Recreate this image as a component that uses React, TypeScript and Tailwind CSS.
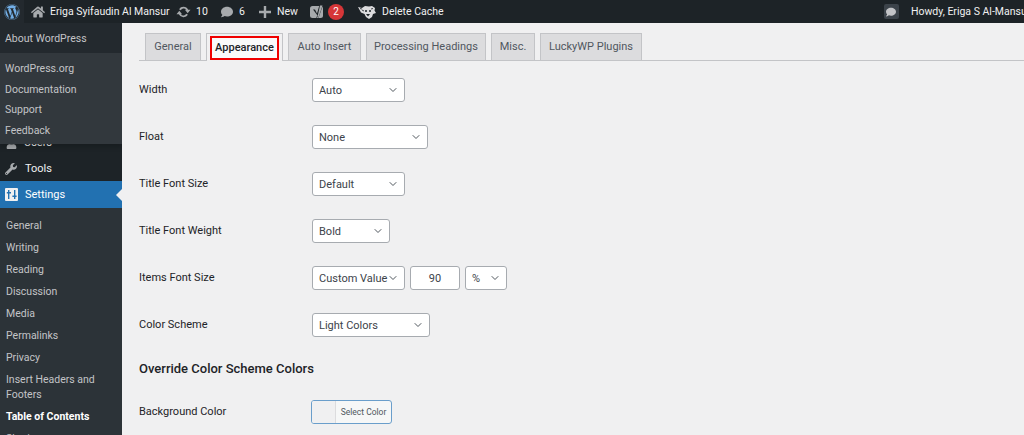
import React from "react";
import { ChevronDown } from "lucide-react";
import { FaWordpress, FaHome, FaComment, FaWrench, FaUser } from "react-icons/fa";

const Select = ({ label, w }: { label: string; w: string }) => (
  <div
    className={`${w} h-[24px] shrink-0 flex items-center justify-between bg-white border border-[#a7abb0] rounded-[3px] pl-[6px] pr-[5px] text-[11px] text-[#3c434a]`}
  >
    <span className="whitespace-nowrap pt-[2px]">{label}</span>
    <ChevronDown size={12} strokeWidth={2} className="text-[#50575e] shrink-0" />
  </div>
);

const Row = ({ label, children }: { label: string; children: React.ReactNode }) => (
  <div className="h-[47px] flex items-start shrink-0">
    <div className="w-[173px] shrink-0 pt-[2px] text-[11px] leading-[20px] text-[#1d2327] [font-weight:450]">{label}</div>
    <div className="flex gap-[5px]">{children}</div>
  </div>
);

const tabs = [
  { name: "General", w: "w-[56px]" },
  { name: "Auto Insert", w: "w-[73px]" },
  { name: "Processing Headings", w: "w-[120px]" },
  { name: "Misc.", w: "w-[44px]" },
  { name: "LuckyWP Plugins", w: "w-[102px]" },
];
const subMenu = ["General", "Writing", "Reading", "Discussion", "Media", "Permalinks", "Privacy"];

const Tab = ({ name, w }: { name: string; w: string }) => (
  <div
    className={`${w} h-[27px] bg-[#dcdcde] border border-b-0 border-[#c3c4c7] flex items-center justify-center text-[11px] text-[#50575e] whitespace-nowrap shrink-0`}
  >
    {name}
  </div>
);

const TopBar = () => (
  <div className="h-[23px] bg-[#1d2327] flex items-center text-[10.5px] text-[#f0f0f1] shrink-0 whitespace-nowrap [&>*]:shrink-0">
    <div className="w-[24px] h-[23px] flex items-center justify-center bg-[#23292e]">
      <FaWordpress size={16} className="text-[#72aee6]" />
    </div>
    <FaHome size={14} className="ml-[7px] text-[#a7aaad]" />
    <span className="ml-[5px] w-[114px]">Eriga Syifaudin Al Mansur</span>
    <svg width="15" height="14" viewBox="0 0 20 20" className="ml-[12px] text-[#a7aaad]" fill="currentColor">
      <path d="M10 2.500a7.500 7.500 0 0 1 6.700 4.200H20l-4 5-4-5h1.900A4.500 4.500 0 0 0 6.200 7.500L3.600 6A7.500 7.500 0 0 1 10 2.500zM4 8.300l4 5H6.100a4.500 4.500 0 0 0 7.700-.8l2.600 1.500A7.500 7.500 0 0 1 3.300 13.300H0z" />
    </svg>
    <span className="ml-[5px] w-[11px]">10</span>
    <FaComment size={12} className="ml-[14px] text-[#a7aaad]" />
    <span className="ml-[6px] w-[6px]">6</span>
    <svg width="12" height="12" viewBox="0 0 12 12" className="ml-[14px] text-[#a7aaad]" fill="currentColor">
      <path d="M4.800 0h2.400v4.800H12v2.400H7.200V12H4.800V7.200H0V4.800h4.800z" />
    </svg>
    <span className="ml-[6px] w-[20px]">New</span>
    <svg width="15" height="15" viewBox="0 0 15 15" className="ml-[13px]">
      <rect y="2" width="13" height="12" rx="2.500" fill="#a7aaad" />
      <path d="M3 5.500h2L7 9.500 9.500 1H13l-4 11.500c-.4 1-1 1.800-2.500 2.200v-2c.8-.3 1-.8 1-1.300z" fill="#1d2327" />
      <path d="M10 1.500h2.500L9 12c-.4 1.100-1 1.800-2 2.200v-1.200c.7-.3.900-.8.800-1.500z" fill="#a7aaad" />
    </svg>
    <span className="ml-[3px] w-[16px] h-[16px] rounded-full bg-[#d63638] text-white text-[10px] flex items-center justify-center">2</span>
    <svg width="18" height="14" viewBox="0 0 18 14" className="ml-[14px]">
      <path d="M0 2 4 3 7 1l4 .5L14 1l3 2-.5 2.500L18 8l-3 1-1 3-3 2-3-2-1.500-3L3 7.500z" fill="#dcdcde" />
      <path d="M4 5l2 1M13 4l2-.5M2 3.500l2 .5" stroke="#1d2327" strokeWidth="0.8" />
      <circle cx="8" cy="6" r="1" fill="#1d2327" />
      <circle cx="12" cy="6" r="1" fill="#1d2327" />
      <path d="M8 9h4l-2 2.500z" fill="#1d2327" />
    </svg>
    <span className="ml-[6px] w-[58px]">Delete Cache</span>
    <div className="ml-[443px] w-[16px] h-[23px] flex items-center justify-center">
      <div className="w-[15px] h-[15px] rounded-[2px] bg-[#3c434a] flex items-center justify-center">
        <FaComment size={10} className="text-[#c3c4c7]" />
      </div>
    </div>
    <span className="ml-[12px]">Howdy, Eriga S Al-Mansur</span>
  </div>
);

const Sidebar = () => (
  <div className="w-[122px] shrink-0 bg-[#1d2327] relative flex flex-col text-[11px] overflow-hidden whitespace-nowrap">
    <div className="h-[107px] shrink-0" />
    <div className="h-[26px] flex items-center pl-[6px] gap-[7px] text-[#f0f0f1] shrink-0">
      <FaUser size={11} className="text-[#a7aaad]" />
      <span>Users</span>
    </div>
    <div className="h-[25px] flex items-center pl-[5px] gap-[8px] text-[#f0f0f1] shrink-0">
      <FaWrench size={12} className="text-[#a7aaad]" />
      <span className="pt-[1px]">Tools</span>
    </div>
    <div className="h-[27px] flex items-center pl-[5px] gap-[7px] bg-[#2271b1] text-white relative shrink-0">
      <svg width="13" height="13" viewBox="0 0 13 13">
        <rect width="13" height="13" rx="1" fill="#f0f0f1" />
        <path d="M3 2h1.400v2H6v1.400H4.400V11H3V5.400H1.800V4H3zM9 2h1.400v5.600h1.200V9h-1.200v2H9V9H7.400V7.600H9z" fill="#2271b1" />
      </svg>
      <span className="pt-[2px]">Settings</span>
      <span className="absolute right-0 top-[8px] w-0 h-0 border-y-[6px] border-y-transparent border-r-[6px] border-r-[#f0f0f1]" />
    </div>
    <div className="flex-1 bg-[#2c3338] pt-[7px] text-[#c3c4c7] text-[10.5px] leading-[22px] pl-[6px]">
      {subMenu.map((item) => (
        <div key={item}>{item}</div>
      ))}
      <div className="leading-[14.500px] py-[4px]">
        Insert Headers and
        <br />
        Footers
      </div>
      <div className="font-bold text-white">Table of Contents</div>
      <div>Sharing</div>
    </div>
    <div className="absolute top-0 left-0 w-[122px] h-[121px] text-[10.5px] text-[#c3c4c7] bg-[#32383d] shadow-[0_3px_5px_rgba(0,0,0,0.2)]">
      <div className="h-[30px] bg-[#23292e] flex items-center pl-[5px] pt-[1px]">About WordPress</div>
      <div className="pt-[6px] pl-[5px] leading-[20.500px]">
        <div>WordPress.org</div>
        <div>Documentation</div>
        <div>Support</div>
        <div>Feedback</div>
      </div>
    </div>
  </div>
);

export default function App() {
  return (
    <div
      className="w-[1024px] h-[435px] overflow-hidden flex flex-col bg-[#f0f0f1]"
      style={{ fontFamily: 'Roboto, "Noto Sans", sans-serif' }}
    >
      <TopBar />
      <div className="flex flex-1 min-h-0">
        <Sidebar />
        <div className="flex-1 pl-[17px] pt-[10px] flex flex-col min-w-0">
          <div className="h-[28px] flex items-end pl-[6px] gap-[5px] border-b border-[#c3c4c7] shrink-0">
            <Tab {...tabs[0]} />
            <div className="w-[77px] h-[28px] mb-[-1px] pl-[3px] pt-[2px] bg-[#f0f0f1] border border-b-0 border-[#c3c4c7] shrink-0">
              <div className="w-[69px] h-[24px] border-2 border-[#f00000] bg-[#fafafa] flex items-center justify-center text-[11px] font-medium text-[#1d2327] whitespace-nowrap">
                Appearance
              </div>
            </div>
            {tabs.slice(1).map((tab) => (
              <Tab key={tab.name} {...tab} />
            ))}
          </div>
          <div className="pt-[17px] flex flex-col">
            <Row label="Width">
              <Select label="Auto" w="w-[93px]" />
            </Row>
            <Row label="Float">
              <Select label="None" w="w-[116px]" />
            </Row>
            <Row label="Title Font Size">
              <Select label="Default" w="w-[93px]" />
            </Row>
            <Row label="Title Font Weight">
              <Select label="Bold" w="w-[78px]" />
            </Row>
            <Row label="Items Font Size">
              <Select label="Custom Value" w="w-[93px]" />
              <div className="w-[50px] h-[24px] bg-white border border-[#a7abb0] rounded-[3px] flex items-center justify-center pt-[2px] text-[11px] text-[#3c434a]">
                90
              </div>
              <Select label="%" w="w-[42px]" />
            </Row>
            <Row label="Color Scheme">
              <Select label="Light Colors" w="w-[118px]" />
            </Row>
            <div className="h-[40px] shrink-0 text-[13px] leading-[17px] font-medium text-[#1d2327]">
              Override Color Scheme Colors
            </div>
            <div className="flex items-start">
              <div className="w-[172px] shrink-0 pt-[2px] text-[11px] leading-[20px] text-[#1d2327] [font-weight:450]">
                Background Color
              </div>
              <div className="w-[81px] h-[24px] flex bg-[#f6f7f7] border border-[#6a9ecb] rounded-[3px] overflow-hidden">
                <div className="w-[24px] border-r border-[#dcdcde] bg-[#f0f0f1]" />
                <div className="flex-1 flex items-center justify-center text-[8.500px] text-[#50575e] whitespace-nowrap">
                  Select Color
                </div>
              </div>
            </div>
          </div>
        </div>
      </div>
    </div>
  );
}
